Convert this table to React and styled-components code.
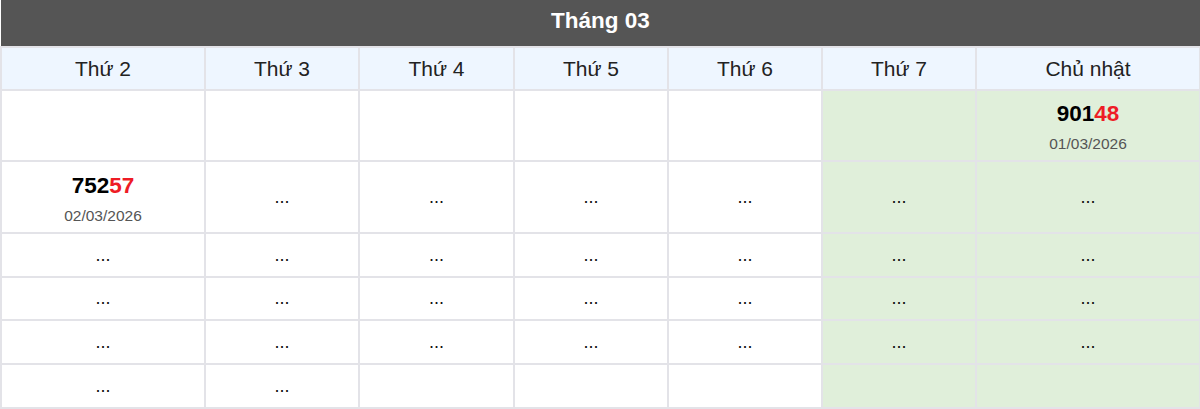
import React from 'react'
import styled, { createGlobalStyle } from 'styled-components'

const GlobalStyle = createGlobalStyle`
  body {
    margin: 0;
    background: #fff;
    font-family: 'Liberation Sans', Arial, sans-serif;
  }
`

const Table = styled.table`
  width: 1199px;
  border-collapse: collapse;
  table-layout: fixed;
  font-family: 'Liberation Sans', Arial, sans-serif;
`

const Title = styled.th`
  background: #555555;
  color: #fff;
  height: 42px;
  padding: 0 0 4px;
  font-size: 22.5px;
  font-weight: bold;
  text-align: center;
  border-bottom: 2px solid #e3e3e8;
`

const DayHead = styled.th`
  background: #eef6ff;
  color: #222;
  height: 39px;
  font-size: 21px;
  font-weight: normal;
  text-align: center;
  border: 2px solid #e3e3e8;
`

const Cell = styled.td`
  background: ${p => (p.$weekend ? '#e0efda' : '#fff')};
  height: ${p => p.$h}px;
  border: 2px solid #e3e3e8;
  text-align: center;
  vertical-align: middle;
  font-size: 18px;
  color: #111;
  padding: 0;
`

const Number = styled.div`
  margin-top: 3px;
  font-size: 22.5px;
  font-weight: bold;
  color: #000;
  line-height: 26px;
  span {
    color: #ee1c25;
  }
`

const DateText = styled.div`
  font-size: 15.5px;
  color: #555;
  margin-top: 8px;
  line-height: 18px;
`

const days = ['Thứ 2', 'Thứ 3', 'Thứ 4', 'Thứ 5', 'Thứ 6', 'Thứ 7', 'Chủ nhật']
const widths = [204, 154, 155, 154, 154, 154, 224]

const Result = ({ num, date }) => (
  <>
    <Number>
      {num.slice(0, 3)}
      <span>{num.slice(3)}</span>
    </Number>
    <DateText>{date}</DateText>
  </>
)

// null = empty cell, '...' = pending, object = result
const rows = [
  { h: 69, cells: [null, null, null, null, null, null, { num: '90148', date: '01/03/2026' }] },
  { h: 70, cells: [{ num: '75257', date: '02/03/2026' }, '...', '...', '...', '...', '...', '...'] },
  { h: 42, cells: ['...', '...', '...', '...', '...', '...', '...'] },
  { h: 41, cells: ['...', '...', '...', '...', '...', '...', '...'] },
  { h: 42, cells: ['...', '...', '...', '...', '...', '...', '...'] },
  { h: 42, cells: ['...', '...', null, null, null, null, null] },
]

const App = () => (
  <>
    <GlobalStyle />
    <Table>
      <colgroup>
        {widths.map((w, i) => (
          <col key={i} style={{ width: w }} />
        ))}
      </colgroup>
      <thead>
        <tr>
          <Title colSpan={7}>Tháng 03</Title>
        </tr>
        <tr>
          {days.map(d => (
            <DayHead key={d}>{d}</DayHead>
          ))}
        </tr>
      </thead>
      <tbody>
        {rows.map((r, ri) => (
          <tr key={ri}>
            {r.cells.map((c, ci) => (
              <Cell key={ci} $h={r.h} $weekend={ci >= 5}>
                {c && typeof c === 'object' ? <Result {...c} /> : c}
              </Cell>
            ))}
          </tr>
        ))}
      </tbody>
    </Table>
  </>
)

export default App
